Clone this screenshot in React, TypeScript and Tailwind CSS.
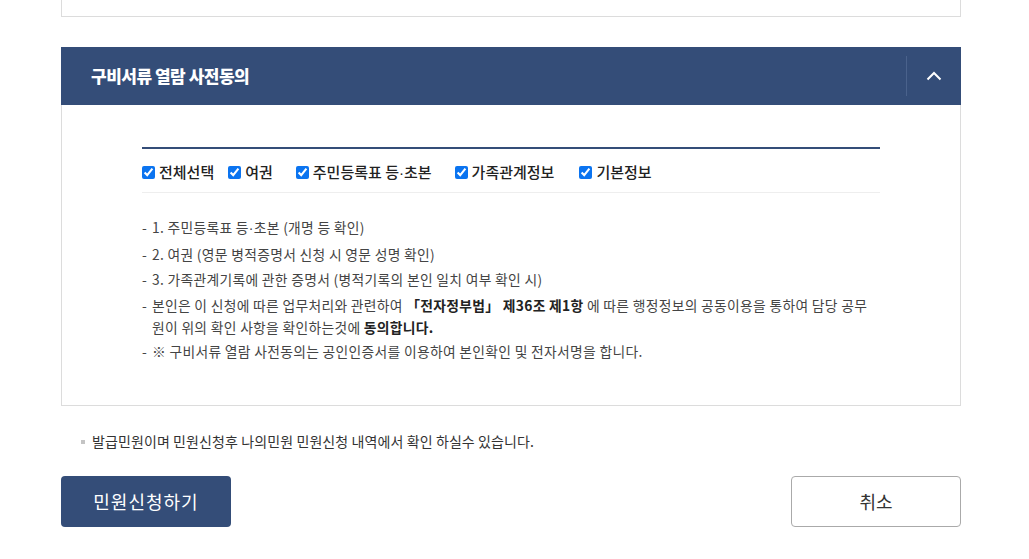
import React from 'react';

const font = { fontFamily: '"Noto Sans CJK KR", "Noto Sans", sans-serif' };

const CheckItem: React.FC<{ label: React.ReactNode; className?: string }> = ({ label, className }) => (
  <label className={`flex items-center gap-[4px] text-[15px] font-medium text-[#222] ${className ?? ''}`}>
    <input type="checkbox" defaultChecked className="w-[13px] h-[13px] m-0 accent-[#0b74f0]" />
    <span>{label}</span>
  </label>
);

const Dot = () => <span className="font-['Liberation_Sans']">·</span>;

const Item: React.FC<{ children: React.ReactNode }> = ({ children }) => (
  <li className="flex">
    <span className="w-[10px] shrink-0">-</span>
    <span>{children}</span>
  </li>
);

export default function App() {
  return (
    <div className="w-[1029px] h-[559px] bg-white overflow-hidden" style={font}>
      <div className="mx-[61px] w-[900px]">
        <div className="h-[17px] border border-t-0 border-[#dcdcdc]" />

        <section className="mt-[30px]">
          <div className="h-[58px] bg-[#344d78] flex items-center">
            <h2 className="flex-1 pl-[30px] text-[17px] font-extrabold text-white tracking-[-0.5px]">구비서류 열람 사전동의</h2>
            <div className="h-[40px] w-px bg-[#4a628c]" />
            <button className="w-[54px] h-full flex items-center justify-center text-white">
              <svg width="16" height="10" viewBox="0 0 16 10" fill="none">
                <path d="M1.5 8.5 L8 2 L14.5 8.5" stroke="white" strokeWidth="2" />
              </svg>
            </button>
          </div>

          <div className="h-[301px] border border-t-0 border-[#dcdcdc] px-[80px] pt-[42px]">
            <div className="border-t-2 border-[#344d78]" />
            <div className="flex items-center pt-[4px] h-[44px] border-b border-[#eeeeee]">
              <CheckItem label="전체선택" className="mr-[14px]" />
              <CheckItem label="여권" className="mr-[23px]" />
              <CheckItem label={<>주민등록표 등<Dot />초본</>} className="mr-[23px]" />
              <CheckItem label="가족관계정보" className="mr-[25px]" />
              <CheckItem label="기본정보" />
            </div>
            <ul className="mt-[22px] text-[13.8px] leading-[25.5px] text-[#444] tracking-[0.3px]">
              <Item>1. 주민등록표 등<Dot />초본 (개명 등 확인)</Item>
              <Item>2. 여권 (영문 병적증명서 신청 시 영문 성명 확인)</Item>
              <Item>3. 가족관계기록에 관한 증명서 (병적기록의 본인 일치 여부 확인 시)</Item>
              <li className="flex leading-[22px] py-[1px]">
                <span className="w-[10px] shrink-0">-</span>
                <span>
                  본인은 이 신청에 따른 업무처리와 관련하여 <b className="text-[#222]">「전자정부법」 제36조 제1항</b> 에 따른 행정정보의 공동이용을 통하여 담당 공무
                  <br />
                  원이 위의 확인 사항을 확인하는것에 <b className="text-[#222]">동의합니다.</b>
                </span>
              </li>
              <Item>※ 구비서류 열람 사전동의는 공인인증서를 이용하여 본인확인 및 전자서명을 합니다.</Item>
            </ul>
          </div>
        </section>

        <p className="mt-[25px] flex items-center pl-[20px] text-[14px] tracking-[0.1px] text-[#333]">
          <span className="w-[4px] h-[4px] bg-[#c4c4c4] mr-[7px]" />
          발급민원이며 민원신청후 나의민원 민원신청 내역에서 확인 하실수 있습니다.
        </p>

        <div className="mt-[24px] flex justify-between">
          <button className="w-[170px] h-[51px] rounded-[4px] bg-[#344d78] text-white text-[18px] tracking-[1px]">민원신청하기</button>
          <button className="w-[170px] h-[51px] rounded-[4px] bg-white border border-[#aaaaaa] text-[#333] text-[18px]">취소</button>
        </div>
      </div>
    </div>
  );
}
